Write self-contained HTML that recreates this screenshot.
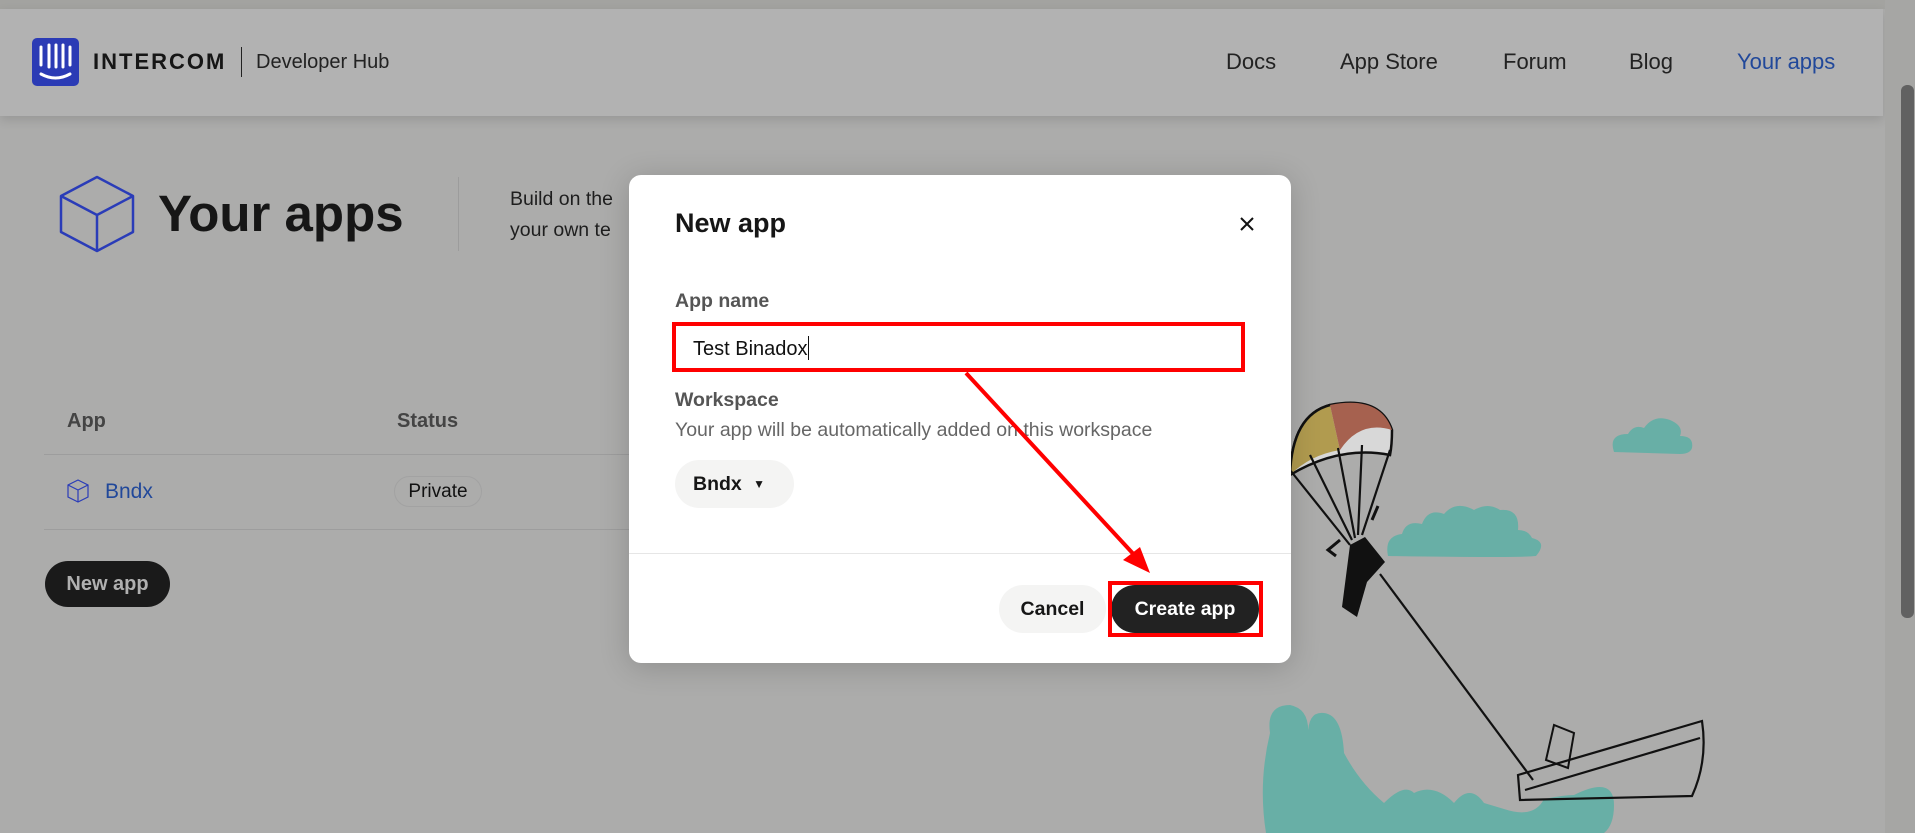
<!DOCTYPE html>
<html><head><meta charset="utf-8"><style>
*{margin:0;padding:0;box-sizing:border-box}
body{width:1915px;height:833px;overflow:hidden;background:#acacab;font-family:"Liberation Sans",sans-serif;position:relative;color:#1a1a1a}
.a{position:absolute;white-space:nowrap}
</style></head><body>
<div class="a" style="left:0;top:0;width:1915px;height:9px;background:#a3a3a0"></div>
<div class="a" style="left:0;top:9px;width:1883px;height:107px;background:#b2b2b2;box-shadow:0 4px 10px rgba(0,0,0,.12)"></div>
<div class="a" style="left:32px;top:38px;width:47px;height:48px;background:#2b3bb5;border-radius:5px">
<svg width="47" height="48" viewBox="0 0 47 48"><g stroke="#fff" stroke-width="3" stroke-linecap="round" fill="none"><path d="M9 9v18M17 7v22M24 7v22M31 7v22M38 9v18"/><path d="M9 36q14.5 8 29 0"/></g></svg></div>
<div class="a" style="left:93px;top:49px;font-size:22px;font-weight:bold;letter-spacing:2px;color:#161616">INTERCOM</div>
<div class="a" style="left:241px;top:47px;width:1px;height:30px;background:#222"></div>
<div class="a" style="left:256px;top:51px;font-size:20px;color:#222">Developer Hub</div>
<div class="a" style="left:1226px;top:49px;font-size:22px;color:#222">Docs</div>
<div class="a" style="left:1340px;top:49px;font-size:22px;color:#222">App Store</div>
<div class="a" style="left:1503px;top:49px;font-size:22px;color:#222">Forum</div>
<div class="a" style="left:1629px;top:49px;font-size:22px;color:#222">Blog</div>
<div class="a" style="left:1737px;top:49px;font-size:22px;color:#21489a">Your apps</div>
<div class="a" style="left:1885px;top:0;width:30px;height:833px;background:#a6a6a4"></div>
<div class="a" style="left:1901px;top:85px;width:13px;height:533px;background:#616161;border-radius:6px"></div>

<svg class="a" style="left:58px;top:175px" width="78" height="78" viewBox="0 0 78 78"><g fill="none" stroke="#2a3cb8" stroke-width="2.5" stroke-linejoin="round"><path d="M39 2L75 21V57L39 76L3 57V21Z"/><path d="M3 21L39 40L75 21M39 40V76"/></g></svg>
<div class="a" style="left:158px;top:184px;font-size:51px;font-weight:bold;color:#161616">Your apps</div>
<div class="a" style="left:458px;top:177px;width:1px;height:74px;background:#9c9c9c"></div>
<div class="a" style="left:510px;top:184px;font-size:19.5px;line-height:31px;color:#1e1e1e">Build on the<br>your own te</div>

<div class="a" style="left:67px;top:410px;font-size:20px;font-weight:bold;color:#444">App</div>
<div class="a" style="left:397px;top:410px;font-size:20px;font-weight:bold;color:#444">Status</div>
<div class="a" style="left:44px;top:454px;width:590px;height:1px;background:#9d9d9d"></div>
<svg class="a" style="left:67px;top:479px" width="22" height="24" viewBox="0 0 22 24"><g fill="none" stroke="#2a3cb8" stroke-width="1.2"><path d="M11 1L21 6V18L11 23L1 18V6Z"/><path d="M1 6L11 11L21 6M11 11V23"/></g></svg>
<div class="a" style="left:105px;top:480px;font-size:21px;color:#21489a">Bndx</div>
<div class="a" style="left:394px;top:476px;width:88px;height:31px;border:1px solid #a2a2a2;border-radius:16px;font-size:19px;line-height:29px;text-align:center;color:#111">Private</div>
<div class="a" style="left:44px;top:529px;width:590px;height:1px;background:#9d9d9d"></div>
<div class="a" style="left:45px;top:561px;width:125px;height:46px;background:#1a1a1a;border-radius:23px;font-size:20px;font-weight:bold;line-height:46px;text-align:center;color:#b0b0b0">New app</div>

<svg class="a" style="left:1260px;top:395px" width="460" height="438" viewBox="1260 395 460 438">
<g fill="#68afa6"><path d="M1614 452q-6-18 14-18q6-10 16-6q10-14 26-8q14 6 10 16q14 0 12 12q-2 6-12 6z"/>
<path d="M1388 556q-4-20 14-22q4-14 20-10q6-16 22-10q12-14 30-4q14-8 26 0q20-2 18 20q10 0 14 8q16 4 4 18q-20 2-148 0z"/>
<path d="M1266 833q-8-50 4-100q-4-28 20-28q20 4 18 30q0-24 16-22q18 2 20 40q16 30 40 50q20-20 30-10q20-10 40 10q16-20 30 0l20 6q30 10 40-10q20-4 30-4q40-20 40 10q0 20-10 28z"/></g>
<path d="M1290 475Q1292 415 1330 405Q1380 395 1392 430Q1392 445 1390 455Q1340 445 1290 475z" fill="#d8d8d8" stroke="#111" stroke-width="2.5"/>
<path d="M1290 475Q1292 415 1330 405L1340 450Q1310 455 1290 475z" fill="#b19b4f"/>
<path d="M1330 405Q1380 395 1392 430Q1360 420 1340 450z" fill="#a6614f"/>
<path d="M1330 405Q1292 415 1290 475" fill="none" stroke="#111" stroke-width="2.5"/>
<g fill="none" stroke="#111" stroke-width="2.2">
<path d="M1290 470L1350 545M1310 455L1352 540M1338 448L1355 538M1362 445L1358 535M1390 450L1362 535"/>
<line x1="1380" y1="574" x2="1533" y2="780"/>
<path d="M1518 775L1702 721q6 40-10 75L1520 800z"/>
<path d="M1525 790L1700 738"/>
</g>
<path d="M1350 545l15-8 20 25-18 20-10 35-15-10z" fill="#111"/>
<path d="M1340 540l-12 10 8 6M1372 520l6-14" stroke="#111" stroke-width="3" fill="none"/>
<path d="M1546 760l8-35 20 8-6 35z" fill="none" stroke="#111" stroke-width="2"/>
</svg>

<div class="a" style="left:629px;top:175px;width:662px;height:488px;background:#fff;border-radius:12px;box-shadow:0 4px 30px rgba(0,0,0,.18)"></div>
<div class="a" style="left:675px;top:208px;font-size:27px;font-weight:bold;color:#161616">New app</div>
<svg class="a" style="left:1240px;top:217px" width="14" height="14" viewBox="0 0 14 14"><path d="M1 1L13 13M13 1L1 13" stroke="#111" stroke-width="2"/></svg>
<div class="a" style="left:675px;top:290px;font-size:19.5px;font-weight:bold;color:#555">App name</div>
<div class="a" style="left:674px;top:324px;width:569px;height:46px;border:1px solid #ccc;border-radius:4px"></div>
<div class="a" style="left:672px;top:322px;width:573px;height:50px;border:4px solid #f00"></div>
<div class="a" style="left:693px;top:336px;font-size:20px;color:#111">Test Binadox<span style="display:inline-block;width:1px;height:24px;background:#111;vertical-align:-5px"></span></div>
<div class="a" style="left:675px;top:389px;font-size:19.5px;font-weight:bold;color:#555">Workspace</div>
<div class="a" style="left:675px;top:419px;font-size:19.5px;color:#666">Your app will be automatically added on this workspace</div>
<div class="a" style="left:675px;top:460px;width:119px;height:48px;background:#f4f4f3;border-radius:24px;font-size:19.5px;font-weight:bold;line-height:48px;padding-left:18px;color:#161616">Bndx <span style="font-size:12px;vertical-align:2px;margin-left:6px">▼</span></div>
<div class="a" style="left:629px;top:553px;width:662px;height:1px;background:#e6e6e6"></div>
<div class="a" style="left:999px;top:585px;width:107px;height:48px;background:#f4f4f3;border-radius:24px;font-size:19.5px;font-weight:bold;line-height:48px;text-align:center;color:#161616">Cancel</div>
<div class="a" style="left:1111px;top:585px;width:148px;height:48px;background:#222;border-radius:24px;font-size:19.5px;font-weight:bold;line-height:48px;text-align:center;color:#fff">Create app</div>
<div class="a" style="left:1108px;top:581px;width:155px;height:56px;border:4px solid #f00"></div>
<svg class="a" style="left:0;top:0" width="1915" height="833"><line x1="966" y1="373" x2="1138" y2="559" stroke="#f00" stroke-width="4"/><path d="M1150 573L1123 560L1140 547Z" fill="#f00"/></svg>
</body></html>
